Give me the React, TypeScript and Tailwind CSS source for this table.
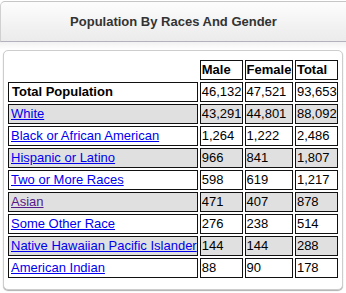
import React from "react";

type Row = { label: string; male: string; female: string; total: string; gray?: boolean; visited?: boolean };

const rows: Row[] = [
  { label: "White", male: "43,291", female: "44,801", total: "88,092", gray: true },
  { label: "Black or African American", male: "1,264", female: "1,222", total: "2,486" },
  { label: "Hispanic or Latino", male: "966", female: "841", total: "1,807", gray: true },
  { label: "Two or More Races", male: "598", female: "619", total: "1,217" },
  { label: "Asian", male: "471", female: "407", total: "878", gray: true, visited: true },
  { label: "Some Other Race", male: "276", female: "238", total: "514" },
  { label: "Native Hawaiian Pacific Islander", male: "144", female: "144", total: "288", gray: true },
  { label: "American Indian", male: "88", female: "90", total: "178" },
];

const cell = "h-[20px] border border-[#111] p-0 leading-[18px] align-middle whitespace-nowrap";

export default function App() {
  return (
    <div className="w-[346px] h-[293px] bg-white overflow-hidden font-['Liberation_Sans',Arial,sans-serif] text-[13px] text-black">
      <div className="mt-[1px] h-[41px] border-t border-t-[#c6c6c6] border-b border-b-[#b3b3c0] border-l border-l-[#d0d0d0] rounded-tl-[5px] bg-gradient-to-b from-[#fdfdfd] to-[#ebebeb] flex items-center justify-center font-bold text-[#333]">
        Population By Races And Gender
      </div>
      <div className="h-[8px] bg-gradient-to-b from-[#f2f2f2] to-white" />
      <div className="mx-[3px] h-[240px] border border-[#cdcdcd] rounded-[5px] shadow-[0_1px_1px_#b0b0b0] bg-white pt-[7px] px-[2px]">
        <table className="border-separate border-spacing-[2px]">
          <colgroup>
            <col className="w-[190px]" />
            <col className="w-[43px]" />
            <col className="w-[50px]" />
            <col className="w-[44px]" />
          </colgroup>
          <tbody>
            <tr>
              <td className="h-[20px] p-0" />
              <td className={`${cell} font-bold pl-[1px]`}>Male</td>
              <td className={`${cell} font-bold pl-[1px]`}>Female</td>
              <td className={`${cell} font-bold pl-[1px]`}>Total</td>
            </tr>
            <tr>
              <td className={`${cell} font-bold pl-[3px]`}>Total Population</td>
              <td className={`${cell} pl-[1px]`}>46,132</td>
              <td className={`${cell} pl-[1px]`}>47,521</td>
              <td className={`${cell} pl-[1px]`}>93,653</td>
            </tr>
            {rows.map((r) => (
              <tr key={r.label} className={r.gray ? "bg-[#e0e0e0]" : "bg-white"}>
                <td className={`${cell} pl-[2px]`}>
                  <a href="#" className={`underline ${r.visited ? "text-[#551a8b]" : "text-[#0000ee]"}`}>
                    {r.label}
                  </a>
                </td>
                <td className={`${cell} pl-[1px]`}>{r.male}</td>
                <td className={`${cell} pl-[1px]`}>{r.female}</td>
                <td className={`${cell} pl-[1px]`}>{r.total}</td>
              </tr>
            ))}
          </tbody>
        </table>
      </div>
    </div>
  );
}
